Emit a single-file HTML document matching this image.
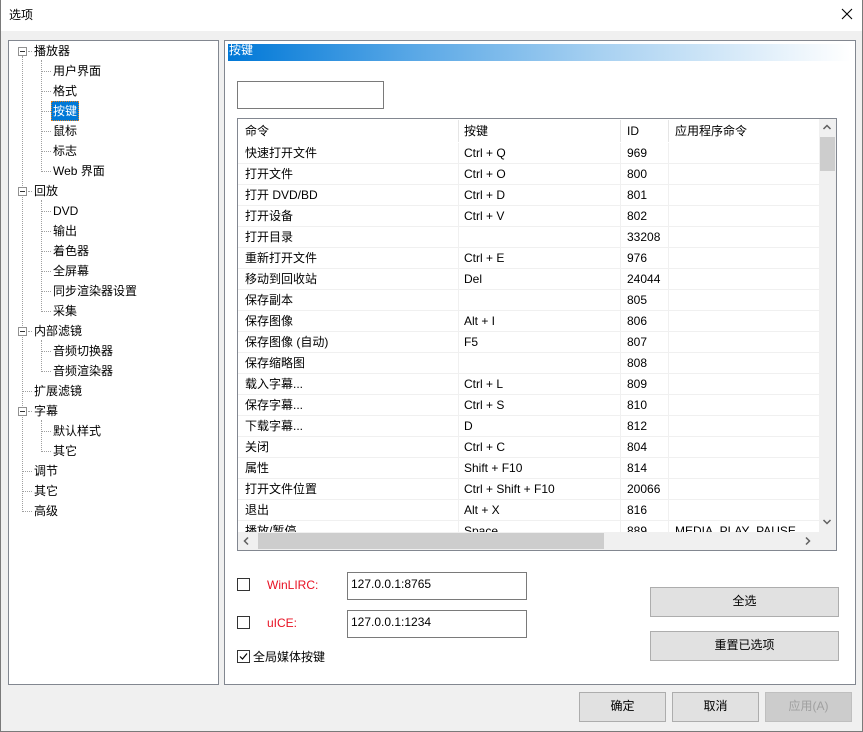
<!DOCTYPE html>
<html><head><meta charset="utf-8"><style>
*{margin:0;padding:0;box-sizing:border-box}
body{width:863px;height:732px;background:#f0f0f0;font-family:"Liberation Sans","Noto Sans CJK SC",sans-serif;font-size:12px;color:#000;position:relative;overflow:hidden}
.a{position:absolute}
.t{position:absolute;white-space:nowrap;line-height:16px}
.win{left:0;top:0;width:863px;height:732px;border:1px solid #7a7a7a;border-top:none}
.title{left:0;top:0;width:862px;height:31px;background:#fff}
.panel{background:#fff;border:1px solid #828790}
.dotv{position:absolute;border-left:1px dotted #a0a0a0;width:0}
.doth{position:absolute;border-top:1px dotted #a0a0a0;height:0}
.box{position:absolute;width:9px;height:9px;border:1px solid #919191;background:#fff}
.box:after{content:"";position:absolute;left:1px;top:3px;width:5px;height:1px;background:#333}
.row{position:absolute;left:0;width:581px;height:21px;border-bottom:1px solid #f0f0f0}
.row span{position:absolute;top:2px;white-space:nowrap;line-height:16px}
.btn{position:absolute;background:#e1e1e1;border:1px solid #adadad;text-align:center;line-height:27px}
.inp{position:absolute;background:#fff;border:1px solid #7a7a7a;padding:3px 3px;line-height:16px}
.cb{position:absolute;width:13px;height:13px;border:1px solid #333;background:#fff}
</style></head><body>
<div class="a title"></div>
<div class="t" style="left:9px;top:7px">选项</div>
<svg class="a" style="left:841px;top:8px" width="12" height="12"><path d="M1 1L11 11M11 1L1 11" stroke="#000" stroke-width="1.1"/></svg>
<div class="a win"></div>

<!-- tree -->
<div class="a panel" style="left:8px;top:40px;width:211px;height:645px"></div>
<div class="dotv" style="left:22px;top:56px;height:456px"></div>
<div class="dotv" style="left:41px;top:60px;height:112px"></div>
<div class="dotv" style="left:41px;top:200px;height:112px"></div>
<div class="dotv" style="left:41px;top:340px;height:32px"></div>
<div class="dotv" style="left:41px;top:420px;height:32px"></div>
<div class="box" style="left:18px;top:47px"></div>
<div class="box" style="left:18px;top:187px"></div>
<div class="box" style="left:18px;top:327px"></div>
<div class="box" style="left:18px;top:407px"></div>
<div class="doth" style="left:28px;top:51px;width:4px"></div>
<div class="doth" style="left:28px;top:191px;width:4px"></div>
<div class="doth" style="left:28px;top:331px;width:4px"></div>
<div class="doth" style="left:28px;top:411px;width:4px"></div>
<div class="doth" style="left:23px;top:391px;width:9px"></div>
<div class="doth" style="left:23px;top:471px;width:9px"></div>
<div class="doth" style="left:23px;top:491px;width:9px"></div>
<div class="doth" style="left:23px;top:511px;width:9px"></div>
<div class="t" style="left:34px;top:43px">播放器</div>
<div class="t" style="left:34px;top:183px">回放</div>
<div class="t" style="left:34px;top:323px">内部滤镜</div>
<div class="t" style="left:34px;top:383px">扩展滤镜</div>
<div class="t" style="left:34px;top:403px">字幕</div>
<div class="t" style="left:34px;top:463px">调节</div>
<div class="t" style="left:34px;top:483px">其它</div>
<div class="t" style="left:34px;top:503px">高级</div>
<div class="doth" style="left:42px;top:71px;width:9px"></div><div class="t" style="left:53px;top:63px">用户界面</div>
<div class="doth" style="left:42px;top:91px;width:9px"></div><div class="t" style="left:53px;top:83px">格式</div>
<div class="doth" style="left:42px;top:111px;width:9px"></div><div class="a" style="left:51px;top:101px;width:28px;height:20px;background:#0078d7;border:1px dotted #e08020"></div><div class="t" style="left:53px;top:103px;color:#fff">按键</div>
<div class="doth" style="left:42px;top:131px;width:9px"></div><div class="t" style="left:53px;top:123px">鼠标</div>
<div class="doth" style="left:42px;top:151px;width:9px"></div><div class="t" style="left:53px;top:143px">标志</div>
<div class="doth" style="left:42px;top:171px;width:9px"></div><div class="t" style="left:53px;top:163px">Web 界面</div>
<div class="doth" style="left:42px;top:211px;width:9px"></div><div class="t" style="left:53px;top:203px">DVD</div>
<div class="doth" style="left:42px;top:231px;width:9px"></div><div class="t" style="left:53px;top:223px">输出</div>
<div class="doth" style="left:42px;top:251px;width:9px"></div><div class="t" style="left:53px;top:243px">着色器</div>
<div class="doth" style="left:42px;top:271px;width:9px"></div><div class="t" style="left:53px;top:263px">全屏幕</div>
<div class="doth" style="left:42px;top:291px;width:9px"></div><div class="t" style="left:53px;top:283px">同步渲染器设置</div>
<div class="doth" style="left:42px;top:311px;width:9px"></div><div class="t" style="left:53px;top:303px">采集</div>
<div class="doth" style="left:42px;top:351px;width:9px"></div><div class="t" style="left:53px;top:343px">音频切换器</div>
<div class="doth" style="left:42px;top:371px;width:9px"></div><div class="t" style="left:53px;top:363px">音频渲染器</div>
<div class="doth" style="left:42px;top:431px;width:9px"></div><div class="t" style="left:53px;top:423px">默认样式</div>
<div class="doth" style="left:42px;top:451px;width:9px"></div><div class="t" style="left:53px;top:443px">其它</div>

<!-- right panel -->
<div class="a panel" style="left:224px;top:40px;width:632px;height:645px"></div>
<div class="a" style="left:228px;top:44px;width:623px;height:17px;background:linear-gradient(90deg,#0078d7 0%,#5aa8e6 30%,#a8d1f1 60%,#ffffff 100%)"></div>
<div class="t" style="left:229px;top:43px;color:#fff;line-height:14px">按键</div>
<div class="inp" style="left:237px;top:81px;width:147px;height:28px"></div>

<div class="a" style="left:237px;top:118px;width:600px;height:433px;border:1px solid #828790;background:#fff;overflow:hidden">
 <div class="a" style="left:0;top:0;width:581px;height:413px;overflow:hidden">
  <div class="a" style="left:220px;top:0;width:1px;height:413px;background:#f0f0f0"></div>
  <div class="a" style="left:382px;top:0;width:1px;height:413px;background:#f0f0f0"></div>
  <div class="a" style="left:430px;top:0;width:1px;height:413px;background:#f0f0f0"></div>
  <div class="a" style="left:0;top:0;width:581px;height:24px;background:#fff"></div>
  <div class="a" style="left:220px;top:1px;width:1px;height:22px;background:#e5e5e5"></div>
  <div class="a" style="left:382px;top:1px;width:1px;height:22px;background:#e5e5e5"></div>
  <div class="a" style="left:430px;top:1px;width:1px;height:22px;background:#e5e5e5"></div>
  <span class="t" style="left:7px;top:4px">命令</span><span class="t" style="left:226px;top:4px">按键</span><span class="t" style="left:389px;top:4px">ID</span><span class="t" style="left:437px;top:4px">应用程序命令</span>
  <div class="row" style="top:24px"><span style="left:7px">快速打开文件</span><span style="left:226px">Ctrl + Q</span><span style="left:389px">969</span></div>
  <div class="row" style="top:45px"><span style="left:7px">打开文件</span><span style="left:226px">Ctrl + O</span><span style="left:389px">800</span></div>
  <div class="row" style="top:66px"><span style="left:7px">打开 DVD/BD</span><span style="left:226px">Ctrl + D</span><span style="left:389px">801</span></div>
  <div class="row" style="top:87px"><span style="left:7px">打开设备</span><span style="left:226px">Ctrl + V</span><span style="left:389px">802</span></div>
  <div class="row" style="top:108px"><span style="left:7px">打开目录</span><span style="left:389px">33208</span></div>
  <div class="row" style="top:129px"><span style="left:7px">重新打开文件</span><span style="left:226px">Ctrl + E</span><span style="left:389px">976</span></div>
  <div class="row" style="top:150px"><span style="left:7px">移动到回收站</span><span style="left:226px">Del</span><span style="left:389px">24044</span></div>
  <div class="row" style="top:171px"><span style="left:7px">保存副本</span><span style="left:389px">805</span></div>
  <div class="row" style="top:192px"><span style="left:7px">保存图像</span><span style="left:226px">Alt + I</span><span style="left:389px">806</span></div>
  <div class="row" style="top:213px"><span style="left:7px">保存图像 (自动)</span><span style="left:226px">F5</span><span style="left:389px">807</span></div>
  <div class="row" style="top:234px"><span style="left:7px">保存缩略图</span><span style="left:389px">808</span></div>
  <div class="row" style="top:255px"><span style="left:7px">载入字幕...</span><span style="left:226px">Ctrl + L</span><span style="left:389px">809</span></div>
  <div class="row" style="top:276px"><span style="left:7px">保存字幕...</span><span style="left:226px">Ctrl + S</span><span style="left:389px">810</span></div>
  <div class="row" style="top:297px"><span style="left:7px">下载字幕...</span><span style="left:226px">D</span><span style="left:389px">812</span></div>
  <div class="row" style="top:318px"><span style="left:7px">关闭</span><span style="left:226px">Ctrl + C</span><span style="left:389px">804</span></div>
  <div class="row" style="top:339px"><span style="left:7px">属性</span><span style="left:226px">Shift + F10</span><span style="left:389px">814</span></div>
  <div class="row" style="top:360px"><span style="left:7px">打开文件位置</span><span style="left:226px">Ctrl + Shift + F10</span><span style="left:389px">20066</span></div>
  <div class="row" style="top:381px"><span style="left:7px">退出</span><span style="left:226px">Alt + X</span><span style="left:389px">816</span></div>
  <div class="row" style="top:402px"><span style="left:7px">播放/暂停</span><span style="left:226px">Space</span><span style="left:389px">889</span><span style="left:437px">MEDIA_PLAY_PAUSE</span></div>
 </div>
 <!-- vscroll -->
 <div class="a" style="left:581px;top:0;width:17px;height:413px;background:#f0f0f0"></div>
 <div class="a" style="left:582px;top:18px;width:15px;height:34px;background:#cdcdcd"></div>
 <svg class="a" style="left:584px;top:4px" width="10" height="8"><path d="M1.5 6L5 2.5L8.5 6" stroke="#606060" stroke-width="1.5" fill="none"/></svg>
 <svg class="a" style="left:584px;top:399px" width="10" height="8"><path d="M1.5 2L5 5.5L8.5 2" stroke="#606060" stroke-width="1.5" fill="none"/></svg>
 <!-- hscroll -->
 <div class="a" style="left:0;top:413px;width:598px;height:18px;background:#f0f0f0"></div>
 <div class="a" style="left:20px;top:414px;width:346px;height:16px;background:#cdcdcd"></div>
 <svg class="a" style="left:4px;top:417px" width="8" height="10"><path d="M6 1.5L2.5 5L6 8.5" stroke="#606060" stroke-width="1.5" fill="none"/></svg>
 <svg class="a" style="left:566px;top:417px" width="8" height="10"><path d="M2 1.5L5.5 5L2 8.5" stroke="#606060" stroke-width="1.5" fill="none"/></svg>
</div>

<div class="cb" style="left:237px;top:578px"></div>
<div class="t" style="left:267px;top:577px;color:#e81123">WinLIRC:</div>
<div class="inp" style="left:347px;top:572px;width:180px;height:28px">127.0.0.1:8765</div>
<div class="cb" style="left:237px;top:616px"></div>
<div class="t" style="left:267px;top:615px;color:#e81123">uICE:</div>
<div class="inp" style="left:347px;top:610px;width:180px;height:28px">127.0.0.1:1234</div>
<div class="cb" style="left:237px;top:650px"></div>
<svg class="a" style="left:238px;top:651px" width="11" height="11"><path d="M2 5.5L4.5 8L9 2.5" stroke="#000" stroke-width="1.2" fill="none"/></svg>
<div class="t" style="left:253px;top:649px">全局媒体按键</div>
<div class="btn" style="left:650px;top:587px;width:189px;height:30px">全选</div>
<div class="btn" style="left:650px;top:631px;width:189px;height:30px">重置已选项</div>

<div class="btn" style="left:579px;top:692px;width:87px;height:30px">确定</div>
<div class="btn" style="left:672px;top:692px;width:87px;height:30px">取消</div>
<div class="btn" style="left:765px;top:692px;width:87px;height:30px;background:#ccc;border-color:#bfbfbf;color:#a0a0a0">应用(A)</div>
</body></html>
